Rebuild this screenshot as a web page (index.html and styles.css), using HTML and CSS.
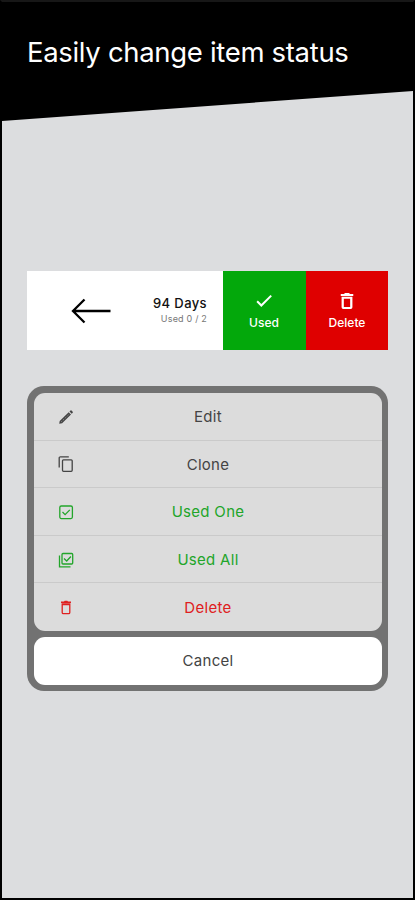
FILE: index.html
```html
<!DOCTYPE html>
<html lang="en">
<head>
<meta charset="utf-8">
<title>Easily change item status</title>
<link rel="stylesheet" href="styles.css">
</head>
<body>
<main class="screen">
  <header class="hero"><h1>Easily change item status</h1></header>
  <section class="swipe">
    <div class="item">
      <svg class="arrow" viewBox="0 0 40 26"><path d="M39.500 13H2M13.500 1.500 2 13 13.500 24.500"/></svg>
      <div class="info"><strong>94 Days</strong><span>Used 0 / 2</span></div>
    </div>
    <button class="action used">
      <svg viewBox="0 0 24 24"><path d="M8.800 15.700 4.600 11.500 2.900 13.200 8.800 19.100 21.500 6.400 19.800 4.700z"/></svg>
      <span>Used</span>
    </button>
    <button class="action delete">
      <svg viewBox="0 0 24 24"><path fill-rule="evenodd" d="M4.500 3.500H8.500l1-1h5l1 1h4v2.500h-15zM5.500 7h13v12.500a2 2 0 0 1-2 2h-9a2 2 0 0 1-2-2zM8.200 9.300v9.900h7.600V9.300z"/></svg>
      <span>Delete</span>
    </button>
  </section>
  <section class="sheet">
    <ul class="menu">
      <li><svg viewBox="0 0 16 16"><path class="solid" d="m1.200 14.800.5-2.900 9-8.600 2.300 2.300-8.900 8.700zM11.500 2.500l1-1q.5-.4 1 0l1.200 1.200q.4.500 0 1l-1 1z"/><path class="glint" d="m3.200 12.900 8-7.700"/></svg><span>Edit</span></li>
      <li><svg viewBox="0 0 16 16"><path d="M1.200 11.500V2q0-1.200 1.200-1.200h8.400"/><rect x="4.500" y="3.800" width="9.700" height="11.500" rx="1"/></svg><span>Clone</span></li>
      <li class="green"><svg viewBox="0 0 16 16"><rect x="1.800" y="2" width="12.600" height="12.600" rx="1.500"/><path d="m4.500 8 2.600 2.600 4.700-4.700"/></svg><span>Used One</span></li>
      <li class="green"><svg viewBox="0 0 16 16"><rect x="4" y="1.500" width="10.700" height="10.500" rx="1"/><path d="M1.500 3.500v11.300h11M6 6.500 8.700 9l4.200-4.500"/></svg><span>Used All</span></li>
      <li class="red"><svg viewBox="0 0 16 16"><path class="solid" d="M3 2.500h3l.7-.8h2.600l.7.800h3v1.600H3z"/><path d="M4.200 5h7.600v8.500q0 1.200-1.200 1.200H5.400q-1.200 0-1.200-1.200zM4.200 5.700h7.600"/></svg><span>Delete</span></li>
    </ul>
    <button class="cancel">Cancel</button>
  </section>
</main>
</body>
</html>
```
FILE: styles.css
```css
* { box-sizing: border-box; }
body { margin: 0; font-family: Inter, "Liberation Sans", sans-serif; }
button { border: 0; padding: 0; font: inherit; }
.screen {
  height: 900px;
  border: 2px solid #000;
  border-top-color: #171717;
  background: #dcdddf;
  overflow: hidden;
  display: flex;
  flex-direction: column;
}
.hero {
  height: 120px;
  flex: none;
  padding: 32px 0 0 25px;
  background: #000;
  color: #fff;
  clip-path: polygon(0 0, 100% 0, 100% 89px, 0 119px);
}
h1 { margin: 0; font-size: 27.500px; line-height: 36px; font-weight: 400; letter-spacing: -.32px; white-space: nowrap; }
.swipe {
  flex: none;
  display: flex;
  width: 361px;
  height: 79px;
  margin: 149px 0 0 25px;
}
.item {
  width: 196px;
  background: #fff;
  display: flex;
  align-items: center;
  justify-content: space-between;
  padding: 0 16px 0 44px;
}
.arrow { width: 40px; height: 26px; fill: none; stroke: #000; stroke-width: 2.300; }
.info { display: flex; flex-direction: column; align-items: flex-end; color: #111; }
.info strong { font-size: 13px; line-height: 16px; font-weight: 500; letter-spacing: .4px; }
.info span { font-size: 9px; line-height: 15px; color: #777; letter-spacing: .2px; }
.action {
  display: flex;
  flex-direction: column;
  align-items: center;
  padding-top: 20px;
  color: #fff;
  font-size: 12px;
  line-height: 16px;
  font-weight: 500;
}
.action svg { width: 20px; height: 20px; fill: #fff; margin-bottom: 4px; }
.used { width: 83px; padding-right: 1px; background: #03a80b; }
.delete { width: 82px; background: #df0000; }
.sheet {
  flex: none;
  width: 361px;
  height: 305px;
  margin: 36px 0 0 25px;
  padding: 7px 6px 6px 7px;
  border-radius: 17px;
  background: #727272;
}
.menu {
  list-style: none;
  margin: 0 0 6px;
  padding: 0;
  height: 238px;
  border-radius: 11px;
  background: #dcdcdc;
  display: grid;
  grid-template-rows: repeat(5, 1fr);
}
.menu li {
  display: grid;
  grid-template-columns: 63px 1fr 63px;
  align-items: center;
  text-align: center;
  padding-top: 1px;
  font-size: 15px;
  letter-spacing: .3px;
  color: #444;
  border-bottom: 1px solid #cacaca;
}
.menu li:last-child { border-bottom-color: transparent; }
.menu svg {
  width: 16px;
  height: 16px;
  justify-self: center;
  fill: none;
  stroke: currentColor;
  stroke-width: 1.300;
}
.menu .solid { fill: currentColor; stroke: none; }
.menu .glint { stroke: #aaa; stroke-width: .7; stroke-dasharray: 1.500 1; }
.menu .green { color: #22a52a; }
.menu .red { color: #df2020; }
.cancel {
  display: block;
  width: 100%;
  height: 48px;
  padding-bottom: 1px;
  border-radius: 11px;
  background: #fff;
  color: #444;
  font-size: 15px;
  letter-spacing: .3px;
}
```
